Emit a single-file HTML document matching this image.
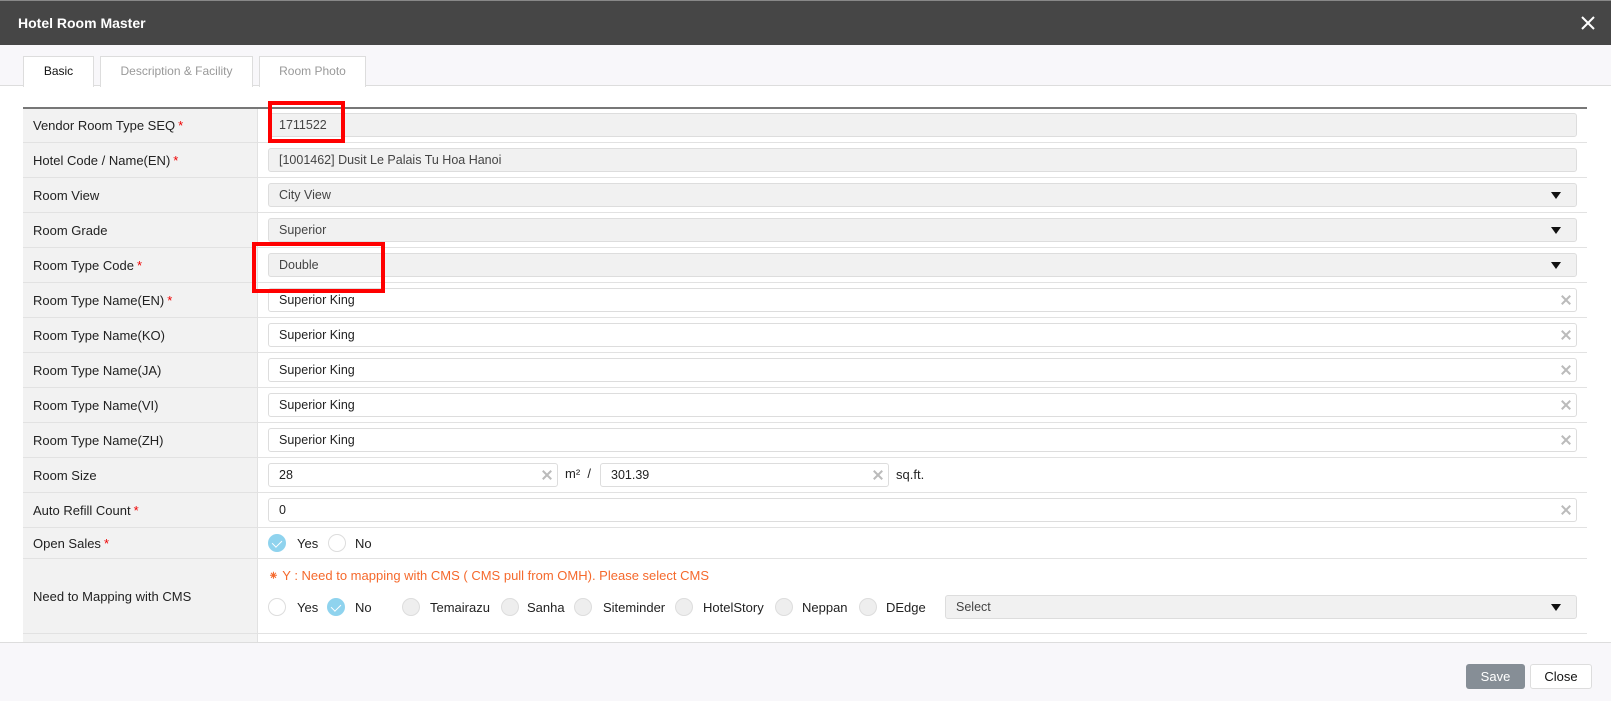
<!DOCTYPE html>
<html><head><meta charset="utf-8"><style>
*{box-sizing:border-box;margin:0;padding:0}
body{width:1611px;height:701px;overflow:hidden;background:#fff;font-family:"Liberation Sans",Arial,sans-serif;font-size:12.5px;color:#222;position:relative}
.hdr{position:absolute;left:0;top:0;width:1611px;height:45px;background:#464646;border-top:1px solid #888}
.hdr .t{position:absolute;left:18px;top:14px;color:#fff;font-weight:bold;font-size:14px}
.hdr .x{position:absolute;left:1578px;top:12px;width:20px;height:20px}
.tabbar{position:absolute;left:0;top:45px;width:1611px;height:41px;background:#f8f7fa;border-bottom:1px solid #ddd}
.tab{position:absolute;top:11px;height:31px;border:1px solid #ddd;border-bottom:none;background:#fff;color:#999;font-size:12px;text-align:center;line-height:28px}
.tab.on{color:#111;height:31px}
.tbl{position:absolute;left:23px;top:107px;width:1564px;border-top:2px solid #777}
.row{position:absolute;left:23px;width:1564px;border-bottom:1px solid #e2e2e2}
.lab{position:absolute;left:0;top:0;bottom:0;width:235px;background:#f2f2f2;border-right:1px solid #e2e2e2;padding-left:10px;display:flex;align-items:center;font-size:13px}
.req{color:#e00;margin-left:3px}
.inp{position:absolute;left:245px;height:24px;border:1px solid #ddd;border-radius:3px;background:#fff;padding-left:10px;line-height:22px;font-size:12.5px}
.dis{background:#f1f1f1;color:#444}
.arr{position:absolute;right:15px;top:8px;width:0;height:0;border-left:5.5px solid transparent;border-right:5.5px solid transparent;border-top:7px solid #111}
.clr{position:absolute;right:5px;top:6px;width:10px;height:10px}
.clr:before,.clr:after{content:"";position:absolute;left:4px;top:-1px;width:2px;height:12px;background:#bbb;transform:rotate(45deg)}
.clr:after{transform:rotate(-45deg)}
.rad{position:absolute;width:18px;height:18px;border-radius:50%;border:1px solid #ddd;background:#fff}
.rad.g{background:#eee}
.rad.on{background:#8fd3ee;border-color:#8fd3ee}
.rad.on:after{content:"";position:absolute;left:5px;top:3px;width:5px;height:8px;border:solid #fff;border-width:0 1.5px 1.5px 0;transform:rotate(45deg)}
.rt{position:absolute;font-size:13px}
.foot{position:absolute;left:0;top:642px;width:1611px;height:59px;background:#f8f7fa;border-top:1px solid #ddd}
.btn{position:absolute;top:21px;height:25px;border-radius:3px;font-size:13px;text-align:center;line-height:25px}
.redbox{position:absolute;border:4px solid #f00}
</style></head><body>
<div class="hdr"><div class="t">Hotel Room Master</div>
<svg class="x" viewBox="0 0 20 20"><path d="M4 4L16 16M16 4L4 16" stroke="#fff" stroke-width="2"/></svg></div>
<div class="tabbar">
<div class="tab on" style="left:23px;width:71px">Basic</div>
<div class="tab" style="left:100px;width:153px">Description &amp; Facility</div>
<div class="tab" style="left:259px;width:107px">Room Photo</div>
</div>
<div class="tbl"></div>

<div class="row" style="top:109px;height:34px"><div class="lab">Vendor Room Type SEQ<span class="req">*</span></div><div class="inp dis" style="top:4px;width:1309px">1711522</div></div>
<div class="row" style="top:143px;height:35px"><div class="lab">Hotel Code / Name(EN)<span class="req">*</span></div><div class="inp dis" style="top:5px;width:1309px">[1001462] Dusit Le Palais Tu Hoa Hanoi</div></div>
<div class="row" style="top:178px;height:35px"><div class="lab">Room View</div><div class="inp dis" style="top:5px;width:1309px">City View<span class="arr"></span></div></div>
<div class="row" style="top:213px;height:35px"><div class="lab">Room Grade</div><div class="inp dis" style="top:5px;width:1309px">Superior<span class="arr"></span></div></div>
<div class="row" style="top:248px;height:35px"><div class="lab">Room Type Code<span class="req">*</span></div><div class="inp dis" style="top:5px;width:1309px">Double<span class="arr"></span></div></div>
<div class="row" style="top:283px;height:35px"><div class="lab">Room Type Name(EN)<span class="req">*</span></div><div class="inp" style="top:5px;width:1309px">Superior King<span class="clr"></span></div></div>
<div class="row" style="top:318px;height:35px"><div class="lab">Room Type Name(KO)</div><div class="inp" style="top:5px;width:1309px">Superior King<span class="clr"></span></div></div>
<div class="row" style="top:353px;height:35px"><div class="lab">Room Type Name(JA)</div><div class="inp" style="top:5px;width:1309px">Superior King<span class="clr"></span></div></div>
<div class="row" style="top:388px;height:35px"><div class="lab">Room Type Name(VI)</div><div class="inp" style="top:5px;width:1309px">Superior King<span class="clr"></span></div></div>
<div class="row" style="top:423px;height:35px"><div class="lab">Room Type Name(ZH)</div><div class="inp" style="top:5px;width:1309px">Superior King<span class="clr"></span></div></div>
<div class="row" style="top:458px;height:35px"><div class="lab">Room Size</div>
<div class="inp" style="top:5px;width:290px">28<span class="clr"></span></div><span class="rt" style="left:542px;top:8px">m² &nbsp;/</span>
<div class="inp" style="left:577px;top:5px;width:289px">301.39<span class="clr"></span></div><span class="rt" style="left:873px;top:9px">sq.ft.</span></div>
<div class="row" style="top:493px;height:35px"><div class="lab">Auto Refill Count<span class="req">*</span></div><div class="inp" style="top:5px;width:1309px">0<span class="clr"></span></div></div>
<div class="row" style="top:528px;height:31px"><div class="lab">Open Sales<span class="req">*</span></div>
<span class="rad on" style="left:245px;top:6px"></span><span class="rt" style="left:274px;top:8px">Yes</span>
<span class="rad" style="left:305px;top:6px"></span><span class="rt" style="left:332px;top:8px">No</span></div>
<div class="row" style="top:559px;height:75px"><div class="lab">Need to Mapping with CMS</div>
<span class="rt" style="left:245px;top:9px;color:#f5692c">⁕ Y : Need to mapping with CMS ( CMS pull from OMH). Please select CMS</span>
<span class="rad" style="left:245px;top:39px"></span><span class="rt" style="left:274px;top:41px">Yes</span>
<span class="rad on" style="left:304px;top:39px"></span><span class="rt" style="left:332px;top:41px">No</span>
<span class="rad g" style="left:379px;top:39px"></span><span class="rt" style="left:407px;top:41px">Temairazu</span>
<span class="rad g" style="left:478px;top:39px"></span><span class="rt" style="left:504px;top:41px">Sanha</span>
<span class="rad g" style="left:551px;top:39px"></span><span class="rt" style="left:580px;top:41px">Siteminder</span>
<span class="rad g" style="left:652px;top:39px"></span><span class="rt" style="left:680px;top:41px">HotelStory</span>
<span class="rad g" style="left:752px;top:39px"></span><span class="rt" style="left:779px;top:41px">Neppan</span>
<span class="rad g" style="left:836px;top:39px"></span><span class="rt" style="left:863px;top:41px">DEdge</span>
<div class="inp dis" style="left:922px;top:36px;width:632px">Select<span class="arr"></span></div></div>
<div class="row" style="top:634px;height:8px;border:none"><div class="lab"></div></div>

<div class="redbox" style="left:268px;top:101px;width:77px;height:42px"></div>
<div class="redbox" style="left:252px;top:242px;width:133px;height:51px"></div>

<div class="foot">
<div class="btn" style="left:1466px;width:59px;background:#868e96;color:#fff">Save</div>
<div class="btn" style="left:1530px;width:62px;background:#fff;border:1px solid #ddd;color:#111;line-height:23px">Close</div>
</div>
</body></html>
